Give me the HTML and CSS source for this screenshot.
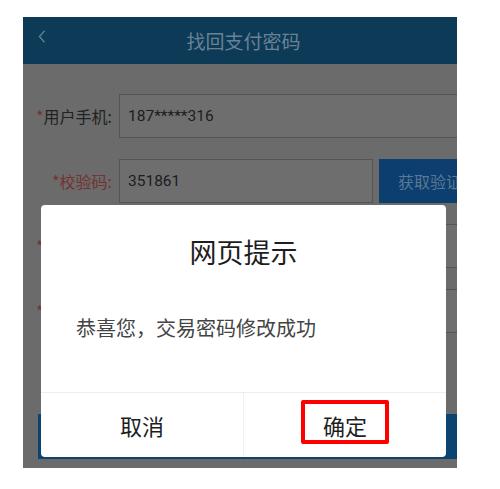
FILE: index.html
```html
<!DOCTYPE html>
<html lang="zh-CN">
<head>
<meta charset="utf-8">
<title>找回支付密码</title>
<link rel="stylesheet" href="styles.css">
</head>
<body>
<div class="frame">
  <div class="screen">
    <header class="topbar">
      <svg class="back" width="8" height="13" viewBox="0 0 8 13"><path d="M6.5 0.8 L1.5 6.5 L6.5 12.2" fill="none" stroke="#5f7c92" stroke-width="1.4"/></svg>
      <h1 class="title">找回支付密码</h1>
    </header>
    <div class="form">
      <div class="row">
        <label class="label"><span class="star">*</span>用户手机:</label>
        <div class="input">187*****316</div>
      </div>
      <div class="row">
        <label class="label red">*校验码:</label>
        <div class="input short">351861</div>
        <div class="codebtn">获取验证码</div>
      </div>
      <div class="row">
        <label class="label"><span class="star">*</span>交易密码:</label>
        <div class="input"></div>
      </div>
      <div class="row">
        <label class="label"><span class="star">*</span>确认密码:</label>
        <div class="input"></div>
      </div>
      <div class="submit">确定</div>
    </div>
    <div class="dialog">
      <div class="dlg-title">网页提示</div>
      <div class="dlg-msg">恭喜您，交易密码修改成功</div>
      <div class="dlg-foot">
        <div class="dlg-btn">取消</div>
        <div class="dlg-btn"><span class="mark">确定</span></div>
      </div>
    </div>
  </div>
</div>
</body>
</html>
```

FILE: styles.css
```css
html, body {
  margin: 0;
  padding: 0;
  background: #ffffff;
}
body {
  font-family: Roboto, "Noto Sans CJK SC", sans-serif;
}
.frame {
  margin: 17px 0 0 23px;
  width: 434px;
  height: 451px;
  overflow: hidden;
  position: relative;
}
.screen {
  width: 441px;
  height: 451px;
  background: #6b6b6b;
  position: relative;
}
.topbar {
  height: 47px;
  background: #0c3a57;
  display: flex;
  align-items: center;
  justify-content: center;
  position: relative;
}
.back {
  position: absolute;
  left: 15px;
  top: 13px;
}
.title {
  margin: 0;
  font-weight: normal;
  font-size: 19px;
  color: #6a8296;
  font-family: "Noto Sans CJK SC", sans-serif;
}
.form {
  padding-top: 30px;
  display: flex;
  flex-direction: column;
  gap: 21px;
}
.row {
  display: flex;
  height: 44px;
  align-items: center;
  gap: 6px;
}
.label {
  width: 89px;
  padding-right: 1px;
  flex: none;
  text-align: right;
  font-size: 16px;
  color: #222222;
  font-family: "Noto Sans CJK SC", sans-serif;
  white-space: nowrap;
}
.star, .red {
  color: #743232;
}
.input {
  flex: 1;
  height: 42px;
  border: 1px solid #545454;
  background: #6e6e6e;
  font-size: 15.5px;
  line-height: 42px;
  padding-left: 8px;
  color: #1c1c1c;
}
.input.short {
  flex: none;
  width: 244px;
}
.codebtn {
  flex: 1;
  height: 44px;
  background: #0c3e70;
  color: #5a7893;
  font-size: 16px;
  line-height: 44px;
  padding-left: 19px;
  white-space: nowrap;
  overflow: hidden;
  font-family: "Noto Sans CJK SC", sans-serif;
}
.submit {
  margin: 60px 0 0 15px;
  height: 45px;
  background: #0b4470;
  color: #6a8296;
  text-align: center;
  line-height: 45px;
  font-size: 18px;
}
.dialog {
  position: absolute;
  left: 18px;
  top: 188px;
  width: 405px;
  height: 252px;
  background: #ffffff;
  border-radius: 4px;
  display: flex;
  flex-direction: column;
  font-family: "Noto Sans CJK SC", sans-serif;
}
.dlg-title {
  margin-top: 31px;
  text-align: center;
  font-size: 27px;
  line-height: 32px;
  color: #1e1e1e;
}
.dlg-msg {
  margin-top: 48px;
  padding-left: 35px;
  font-size: 20px;
  line-height: 24px;
  color: #444444;
}
.dlg-foot {
  margin-top: auto;
  height: 64px;
  border-top: 1px solid #eeeeee;
  display: flex;
}
.dlg-btn {
  flex: 1;
  display: flex;
  align-items: center;
  justify-content: center;
  font-size: 22px;
  color: #1e1e1e;
}
.dlg-btn + .dlg-btn {
  border-left: 1px solid #f0f0f0;
}
.mark {
  display: inline-block;
  border: 4px solid #ff0000;
  border-radius: 2px;
  padding: 9px 18px 3px;
  line-height: 24px;
  margin-top: -6px;
}
```
